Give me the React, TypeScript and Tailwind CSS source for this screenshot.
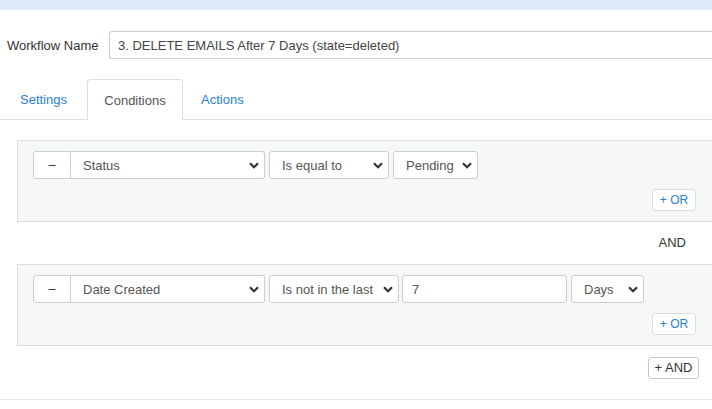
import React from 'react'

// Native-looking select box with bold chevron
function Select({ label, width, className = '' }: { label: string; width: string; className?: string }) {
  return (
    <div
      className={`${width} h-[28px] flex items-center justify-between pl-[12px] pr-[5px] bg-white border border-[#c6ced8] text-[#555] ${className}`}
    >
      <span className="whitespace-nowrap overflow-hidden pt-px">{label}</span>
      <svg width="10" height="7" viewBox="0 0 10 7" className="shrink-0">
        <path d="M1 1.2 L5 5.2 L9 1.2" fill="none" stroke="#333" strokeWidth="2.2" />
      </svg>
    </div>
  )
}

function OrButton() {
  return (
    <div className="mt-[10px] flex justify-end pr-[16px]">
      <button className="w-[44px] h-[22px] rounded-[3px] border border-[#dadfe4] bg-white text-[12px] text-[#2a7fd4] flex items-center justify-center">
        + OR
      </button>
    </div>
  )
}

function Group({ children }: { children: React.ReactNode }) {
  return (
    <div className="ml-[17px] border border-r-0 border-[#dcdfe1] bg-[#f6f7f7] py-[10px] pl-[15px]">
      {children}
      <OrButton />
    </div>
  )
}

function MinusButton() {
  return (
    <div className="w-[38px] h-[28px] flex items-center justify-center bg-white border border-[#c6ced8] rounded-l-[3px] text-[#333]">
      –
    </div>
  )
}

export default function App() {
  return (
    <div className="w-[712px] h-[409px] overflow-hidden bg-white font-['Liberation_Sans',Arial,sans-serif] text-[13px] text-[#333]">
      <div className="h-[10px] bg-[#deeaf8]" />

      <div className="mt-[21px] flex items-center pl-[7px]">
        <label className="w-[102px] shrink-0 pt-px text-[#333]">Workflow Name</label>
        <div className="flex-1 h-[28px] border border-r-0 border-[#c6ced8] rounded-l-[3px] pl-[8px] pt-px flex items-center text-[#444]">
          3. DELETE EMAILS After 7 Days (state=deleted)
        </div>
      </div>

      <div className="mt-[20px] h-[41px] flex border-b border-[#dddddd]">
        <a className="w-[87px] h-[40px] pl-[20px] pt-[2px] flex items-center text-[#2a7fd4]">Settings</a>
        <a className="w-[96px] h-[41px] pt-[2px] flex items-center justify-center bg-white border border-b-0 border-[#dddddd] rounded-t-[4px] text-[#555]">
          Conditions
        </a>
        <a className="h-[40px] pl-[18px] pt-[2px] flex items-center text-[#2a7fd4]">Actions</a>
      </div>

      <div className="mt-[20px]">
        <Group>
          <div className="flex h-[28px]">
            <MinusButton />
            <Select label="Status" width="w-[194px]" className="border-l-0 rounded-r-[3px]" />
            <Select label="Is equal to" width="w-[120px]" className="ml-[4px] rounded-[3px]" />
            <Select label="Pending" width="w-[85px]" className="ml-[4px] rounded-[3px]" />
          </div>
        </Group>

        <div className="h-[42px] flex items-center justify-end pr-[26px] text-[#333]">AND</div>

        <Group>
          <div className="flex h-[28px]">
            <MinusButton />
            <Select label="Date Created" width="w-[194px]" className="border-l-0 rounded-r-[3px]" />
            <Select label="Is not in the last" width="w-[130px]" className="ml-[4px] rounded-[3px]" />
            <div className="ml-[3px] w-[165px] h-[28px] bg-white border border-[#c6ced8] rounded-[3px] pl-[9px] pt-px flex items-center text-[#555]">
              7
            </div>
            <Select label="Days" width="w-[73px]" className="ml-[4px] rounded-[3px]" />
          </div>
        </Group>

        <div className="mt-[11px] flex justify-end pr-[13px]">
          <button className="w-[51px] h-[22px] rounded-[3px] border border-[#c4c8cc] bg-white text-[13px] text-[#333] flex items-center justify-center">
            + AND
          </button>
        </div>

        <div className="mt-[20px] border-t border-[#e6e6e6]" />
      </div>
    </div>
  )
}
